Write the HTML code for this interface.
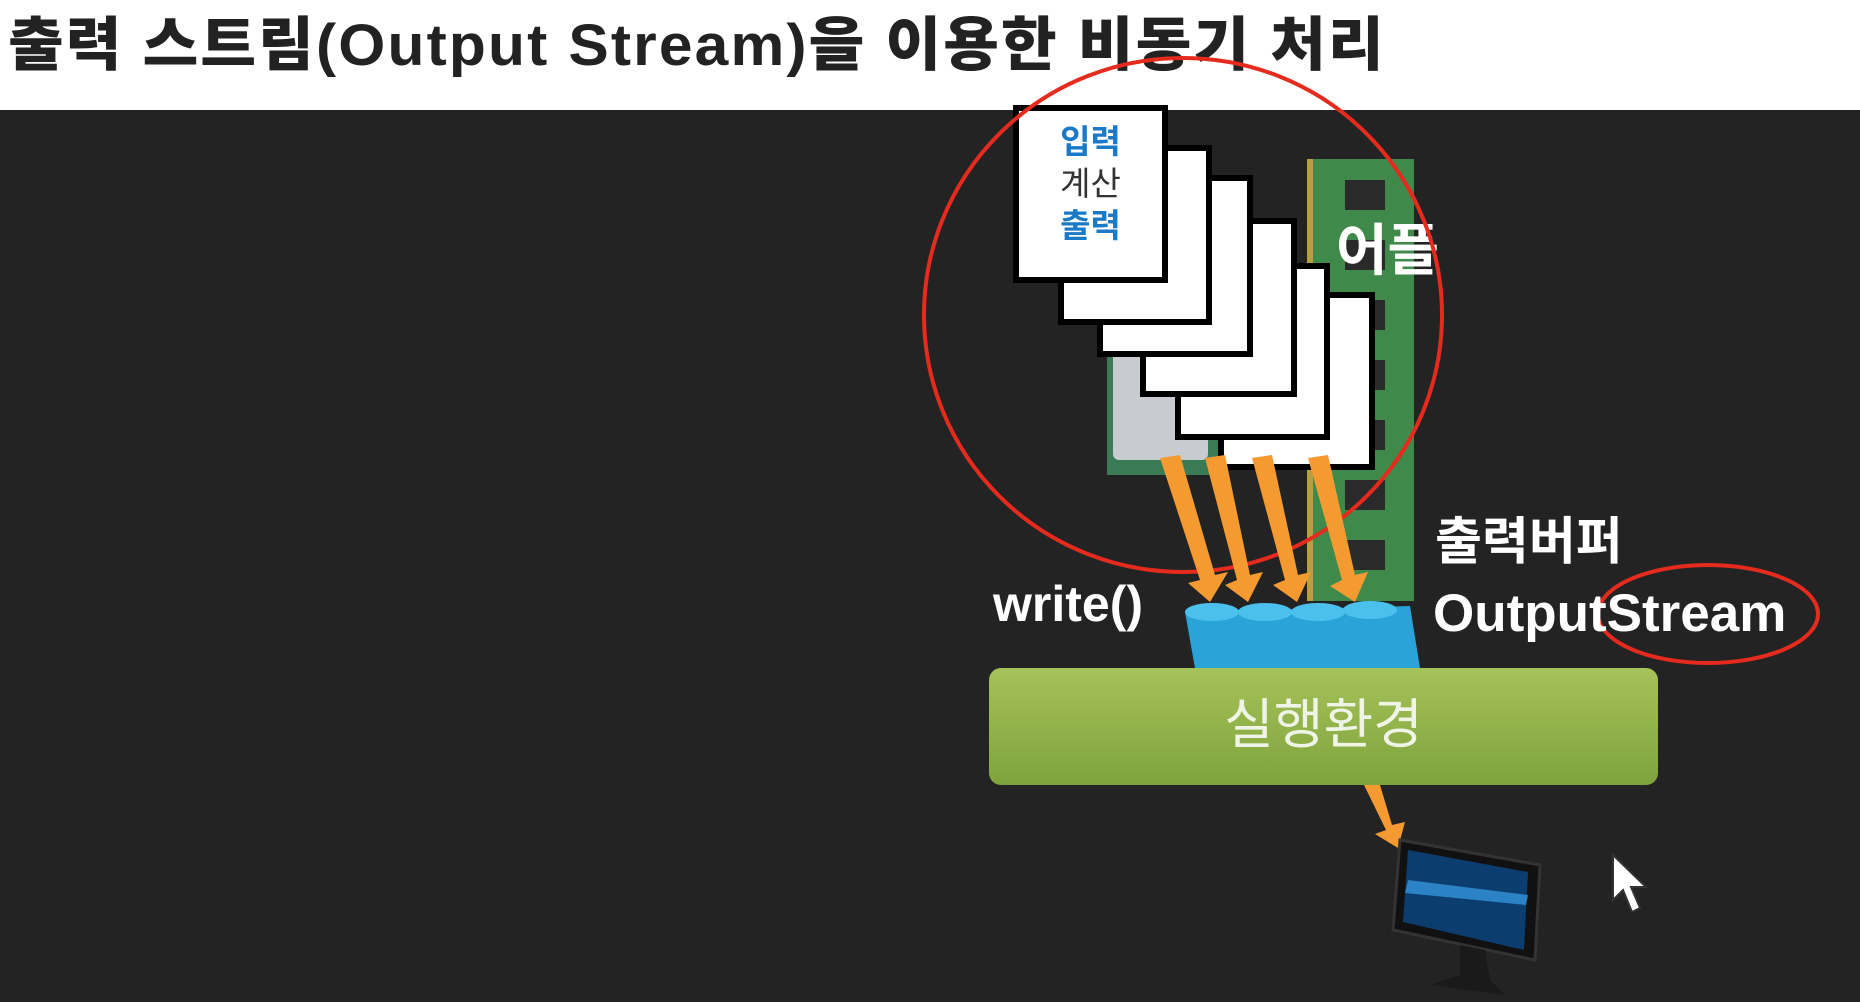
<!DOCTYPE html>
<html><head><meta charset="utf-8"><style>
body{margin:0;width:1860px;height:1002px;overflow:hidden;background:#232323;position:relative;font-family:"Liberation Sans","Noto Sans CJK KR",sans-serif}
.hdr{position:absolute;left:0;top:0;width:1860px;height:110px;background:#fff}
.title{position:absolute;left:8px;top:-2px;font-size:56px;font-weight:900;color:#222;letter-spacing:2px;white-space:nowrap;transform:scale(1.08,1.05);transform-origin:left top}
.pg{position:absolute;background:#fff;border:6px solid #000;box-sizing:border-box}
.t{position:absolute;color:#fff;font-weight:bold;white-space:nowrap}
</style></head><body>
<div class="hdr"></div>
<div class="title">출력 스트림(Output Stream)을 이용한 비동기 처리</div>

<div style="position:absolute;left:1307px;top:159px;width:101px;height:442px;background:#3f8a4a;border-left:6px solid #b8a040"></div>
<div style="position:absolute;left:1345px;top:180px;width:40px;height:420px;background:repeating-linear-gradient(#2a2a2a 0 30px,#3f8a4a 30px 60px)"></div>
<div style="position:absolute;left:1107px;top:344px;width:111px;height:131px;background:#3a7a55"></div>
<div style="position:absolute;left:1113px;top:350px;width:95px;height:110px;background:#c8ccd0;border-radius:6px"></div>

<div class="t" style="left:1336px;top:206px;font-size:56px">어플</div>

<div class="pg" style="left:1218px;top:292px;width:157px;height:178px"></div>
<div class="pg" style="left:1175px;top:263px;width:155px;height:177px"></div>
<div class="pg" style="left:1140px;top:218px;width:157px;height:179px"></div>
<div class="pg" style="left:1097px;top:175px;width:156px;height:182px"></div>
<div class="pg" style="left:1058px;top:145px;width:154px;height:180px"></div>
<div class="pg" style="left:1013px;top:105px;width:155px;height:178px;text-align:center;font-size:33px;line-height:42px;padding-top:10px;font-weight:bold">
<span style="color:#1a7ac8">입력</span><br><span style="color:#333;font-weight:normal">계산</span><br><span style="color:#1a7ac8">출력</span></div>

<svg style="position:absolute;left:0;top:0" width="1860" height="1002">
<ellipse cx="1183" cy="315" rx="259" ry="257" fill="none" stroke="#e52a1e" stroke-width="4"/>
<g fill="#f59a30">
<polygon points="1160,458 1180,455 1215,575 1228,572 1210,602 1188,583 1200,580"/>
<polygon points="1205,458 1225,455 1250,575 1263,572 1248,602 1225,585 1237,580"/>
<polygon points="1252,458 1272,455 1298,575 1311,572 1297,602 1273,585 1285,580"/>
<polygon points="1308,458 1328,455 1355,575 1368,572 1355,602 1330,586 1342,580"/>
<polygon points="1364,785 1380,785 1392,825 1405,822 1398,848 1375,834 1386,830"/>
</g>
<g fill="#2aa4d8"><polygon points="1185,612 1410,606 1420,668 1195,668"/></g>
<g fill="#4cc0ec"><ellipse cx="1212" cy="612" rx="27" ry="9"/><ellipse cx="1265" cy="612" rx="27" ry="9"/><ellipse cx="1318" cy="612" rx="27" ry="9"/><ellipse cx="1370" cy="610" rx="27" ry="9"/></g>
<ellipse cx="1708" cy="614" rx="110" ry="49" fill="none" stroke="#e52a1e" stroke-width="4"/>
<polygon points="1400,840 1540,865 1535,960 1393,930" fill="#111" stroke="#333" stroke-width="3"/>
<polygon points="1408,850 1528,872 1524,950 1403,922" fill="#0b3d6e"/>
<polygon points="1408,880 1528,895 1526,905 1405,893" fill="#2b82c4"/>
<polygon points="1460,945 1485,950 1490,980 1505,995 1430,985 1460,975" fill="#1a1a1a"/>
<polygon points="1613,855 1613,900 1623,890 1632,912 1640,908 1631,887 1646,887" fill="#fff" stroke="#333" stroke-width="2"/>
</svg>

<div class="t" style="left:993px;top:575px;font-size:50px">write()</div>
<div class="t" style="left:1435px;top:500px;font-size:51px">출력버퍼</div>
<div class="t" style="left:1433px;top:583px;font-size:53px">OutputStream</div>

<div style="position:absolute;left:989px;top:668px;width:669px;height:117px;border-radius:12px;background:linear-gradient(#a6c25a,#7fa33c);color:#f0f4e6;font-size:54px;text-align:center;line-height:115px">실행환경</div>
</body></html>
